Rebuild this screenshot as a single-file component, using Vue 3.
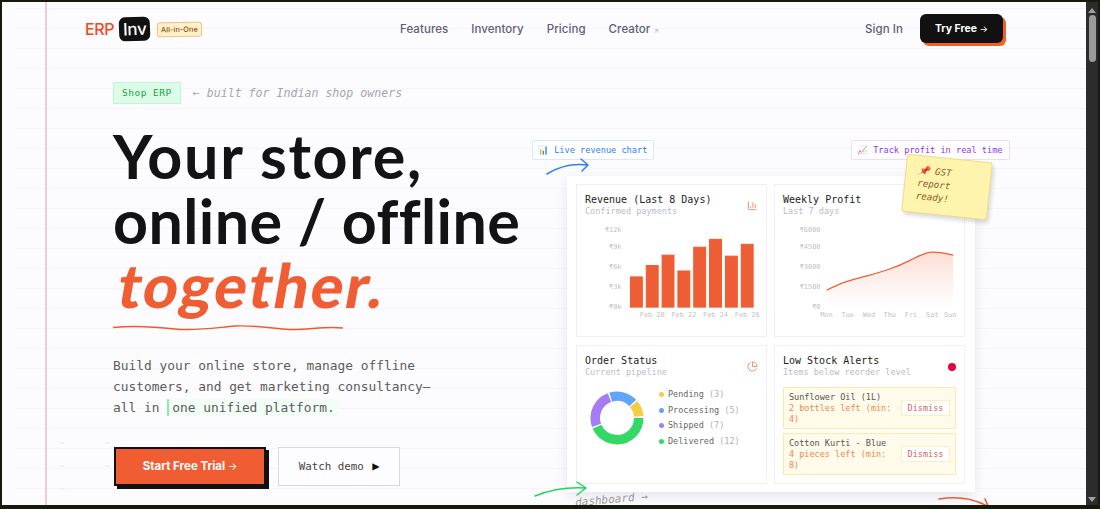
<script setup>
const navLinks = ['Features', 'Inventory', 'Pricing']

const barTops = [277, 265.5, 255, 271, 247, 239, 256, 244]
const revenueY = [['₹12k', 232], ['₹9k', 249], ['₹6k', 269], ['₹3k', 289], ['₹0k', 309]]
const revenueX = [['Feb 20', 652], ['Feb 22', 684], ['Feb 24', 716], ['Feb 26', 748]]

const profitY = [['₹6000', 232], ['₹4500', 249], ['₹3000', 269], ['₹1500', 289], ['₹0', 309]]
const profitX = [['Mon', 826], ['Tue', 847.5], ['Wed', 869], ['Thu', 890], ['Fri', 911.5], ['Sat', 933], ['Sun', 951]]
const profitLine = 'M826 290.5C833 287 840 283.5 847 281.5C854 279.5 861 277.5 869 275.5C876 273.5 883 271.5 890 269C897 266.5 904 263.5 911 260C918 256.500 925 252.500 932 252C940 251.500 947 253.500 954 255'

const circ = 2 * Math.PI * 21.75
const orders = [
  { name: 'Pending', count: 3, color: '#f8cb45' },
  { name: 'Processing', count: 5, color: '#60a5fa' },
  { name: 'Shipped', count: 7, color: '#a67cf2' },
  { name: 'Delivered', count: 12, color: '#35d866' }
]
// donut starts at 3 o'clock and goes clockwise, delivered first
const ringStarts = { Delivered: 0, Shipped: 160, Processing: 253.3, Pending: 320 }
const ringSpans = { Delivered: 160, Shipped: 93.3, Processing: 66.7, Pending: 40 }
const dash = (name) => `${(ringSpans[name] / 360) * circ - 1.6} ${circ}`

const alerts = [
  { name: 'Sunflower Oil (1L)', note: '2 bottles left (min: 4)' },
  { name: 'Cotton Kurti - Blue', note: '4 pieces left (min: 8)' }
]
</script>

<template>
  <div class="desk">
    <div class="page">
      <header class="nav">
        <div class="logo">
          <span class="logoErp">ERP</span>
          <span class="logoInv">Inv</span>
          <span class="logoBadge">All-in-One</span>
        </div>
        <nav class="links">
          <a v-for="link in navLinks" :key="link">{{ link }}</a>
          <a>Creator <small>↗</small></a>
        </nav>
        <div class="navRight">
          <a>Sign In</a>
          <button class="tryFree">Try Free <small>→</small></button>
        </div>
      </header>

      <main class="hero">
        <section class="left">
          <div class="tagRow">
            <span class="shopTag">Shop ERP</span>
            <span class="tagNote">← built for Indian shop owners</span>
          </div>
          <h1 class="headline">
            <span class="lineOne">Your store,</span><br />online / offline<br />
            <span class="together">
              <span class="togetherText">together.</span>
              <svg class="wave" viewBox="0 0 230 8" fill="none">
                <path d="M0 3.500C20 1.500 40 2.500 62 5C82 7 100 4 122 2C142 1 160 4.500 176 5.500C195 6 212 2 230 4" stroke="#f05a30" stroke-width="1.400" />
              </svg>
            </span>
          </h1>
          <p class="intro">
            Build your online store, manage offline<br />
            customers, and get marketing consultancy—<br />
            all in <span class="mark">one unified platform.</span>
          </p>
          <div class="actions">
            <button class="primary">Start Free Trial <small>→</small></button>
            <button class="secondary">Watch demo <b>▶</b></button>
          </div>
        </section>

        <section class="panelWrap">
          <span class="floatTag blue">📊 Live revenue chart</span>
          <span class="floatTag purple">📈 Track profit in real time</span>
          <div class="sticky">📌 GST<br />report<br />ready!</div>

          <div class="panel">
            <article class="card">
              <div class="cardHead">
                <div>
                  <h3>Revenue (Last 8 Days)</h3>
                  <p>Confirmed payments</p>
                </div>
                <svg class="cardIcon" viewBox="0 0 24 24" fill="none" stroke="#f05d33" stroke-width="2">
                  <path d="M3 3v16a2 2 0 0 0 2 2h16" /><path d="M18 17V9" /><path d="M13 17V5" /><path d="M8 17v-3" />
                </svg>
              </div>
              <svg class="chart" viewBox="576 220 191 100">
                <text v-for="t in revenueY" :key="t[0]" x="621" :y="t[1]" text-anchor="end" class="axis">{{ t[0] }}</text>
                <rect v-for="(top, i) in barTops" :key="i" :x="630 + i * 16" :y="top" width="12" :height="307.500 - top" fill="#ee5e36" stroke="#f4572b" />
                <text v-for="t in revenueX" :key="t[0]" :x="t[1]" y="318" text-anchor="middle" class="axis">{{ t[0] }}</text>
              </svg>
            </article>

            <article class="card">
              <div class="cardHead">
                <div>
                  <h3>Weekly Profit</h3>
                  <p>Last 7 days</p>
                </div>
              </div>
              <svg class="chart" viewBox="774 220 191 100">
                <defs>
                  <linearGradient id="profitFill" x1="0" y1="0" x2="0" y2="1">
                    <stop offset="0" stop-color="#f05d33" stop-opacity="0.2" />
                    <stop offset="1" stop-color="#f05d33" stop-opacity="0" />
                  </linearGradient>
                </defs>
                <text v-for="t in profitY" :key="t[0]" x="820" :y="t[1]" text-anchor="end" class="axis">{{ t[0] }}</text>
                <path :d="profitLine + 'V307H826Z'" fill="url(#profitFill)" />
                <path :d="profitLine" fill="none" stroke="#f05d33" stroke-width="1.300" />
                <text v-for="t in profitX" :key="t[0]" :x="t[1]" y="318" text-anchor="middle" class="axis">{{ t[0] }}</text>
              </svg>
            </article>

            <article class="card">
              <div class="cardHead">
                <div>
                  <h3>Order Status</h3>
                  <p>Current pipeline</p>
                </div>
                <svg class="cardIcon" viewBox="0 0 24 24" fill="none" stroke="#f05d33" stroke-width="2">
                  <path d="M21.210 15.890A10 10 0 1 1 8 2.830" /><path d="M22 12A10 10 0 0 0 12 2v10z" />
                </svg>
              </div>
              <div class="orderBody">
                <svg class="donut" viewBox="0 0 54 54">
                  <circle v-for="o in orders" :key="o.name" cx="27" cy="27" r="21.750" fill="none" :stroke="o.color" stroke-width="9.500"
                    :stroke-dasharray="dash(o.name)" :transform="`rotate(${ringStarts[o.name]} 27 27)`" />
                </svg>
                <ul class="legend">
                  <li v-for="o in orders" :key="o.name">
                    <i :style="{ background: o.color }"></i>{{ o.name }} <span>({{ o.count }})</span>
                  </li>
                </ul>
              </div>
            </article>

            <article class="card">
              <div class="cardHead">
                <div>
                  <h3>Low Stock Alerts</h3>
                  <p>Items below reorder level</p>
                </div>
                <span class="redDot"></span>
              </div>
              <div class="alert" v-for="a in alerts" :key="a.name">
                <div class="alertText">
                  <strong>{{ a.name }}</strong>
                  <span>{{ a.note }}</span>
                </div>
                <button class="dismiss">Dismiss</button>
              </div>
            </article>
          </div>
        </section>
      </main>

      <!-- hand drawn arrows and scribbles over the page -->
      <svg class="scribbles" viewBox="0 0 1084 503" fill="none" stroke-linecap="round" stroke-linejoin="round">
        <path d="M545 172C556 165 570 161 586 163M579 157L586 163L580 169" stroke="#2f7df6" stroke-width="1.500" />
        <path d="M533 494C548 488 565 485 583 486M575 480L584 486L575 493" stroke="#22d55e" stroke-width="1.500" />
        <path d="M937 497C955 494 972 497 985 504M978 505L987 506L983 497" stroke="#f05a30" stroke-width="1.600" />
        <path d="M969 160.500L976 161" stroke="#a855f7" stroke-width="1.500" />
        <path d="M58 441h4M103 441h4M58 464h4M103 464h4M58 487h4" stroke="#e8e6ec" />
      </svg>
      <span class="scribbleText">dashboard →</span>
    </div>

    <div class="scrollbar">
      <span class="arrowUp"></span>
      <span class="thumb"></span>
      <span class="arrowDown"></span>
    </div>
  </div>
</template>

<style>
html, body {
  margin: 0;
  background: #141a0c;
  overflow: hidden;
}
</style>

<style scoped>
.desk {
  display: flex;
  height: 509px;
  width: 1100px;
  background: #141a0c;
  overflow: hidden;
}

.page {
  position: relative;
  width: 1084px;
  height: 503px;
  margin: 2px 0 0 2px;
  overflow: hidden;
  background:
    linear-gradient(#f9c9d8, #f9c9d8) 43px 0 / 2px 100% no-repeat,
    repeating-linear-gradient(to bottom, transparent 0 6px, #f7f5f9 6px 7px, transparent 7px 20px) 14px 0 / 100% 100% no-repeat,
    #fcfbfe;
}

.nav {
  display: flex;
  align-items: center;
  height: 54px;
  padding: 0 83px;
  font-family: "Inter", sans-serif;
  font-size: 11.5px;
  font-weight: 500;
  letter-spacing: 0.06px;
  color: #5e5e78;
}

.logo {
  display: flex;
  align-items: center;
  width: 315px;
}

.logoErp {
  font-size: 16px;
  color: #f04a22;
  letter-spacing: -0.4px;
}

.logoInv {
  margin-left: 5px;
  padding: 2px 4px;
  background: #111;
  border-radius: 6px;
  color: #fff;
  font-size: 17px;
  letter-spacing: -0.3px;
  transform: rotate(-2deg);
}

.logoBadge {
  margin-left: 6px;
  padding: 2px 3px;
  background: #fef3c7;
  border: 1px solid #fdba8c;
  border-radius: 3px;
  color: #92400e;
  font-size: 7.300px;
  transform: rotate(-1deg);
}

.links {
  display: flex;
  gap: 23px;
}

.links small {
  font-size: 7px;
  color: #bbb;
}

.navRight {
  display: flex;
  align-items: center;
  gap: 17px;
  margin-left: auto;
}

.tryFree {
  width: 83px;
  height: 29px;
  margin-top: -1px;
  border: none;
  border-radius: 6px;
  background: #111;
  box-shadow: 3px 3px 0 #f4611f;
  color: #fff;
  font-family: inherit;
  font-size: 10.500px;
  font-weight: 700;
}

.tryFree small,
.primary small {
  font-size: 0.85em;
  font-weight: 400;
}

.hero {
  display: flex;
  padding: 26px 0 0 111px;
}

.left {
  width: 454px;
  flex: none;
}

.tagRow {
  display: flex;
  align-items: center;
  gap: 10px;
  font-family: "DejaVu Sans Mono", monospace;
}

.shopTag {
  padding: 0 8px;
  line-height: 20px;
  background: #dcfce7;
  border: 1px solid #bbf7d0;
  color: #16a34a;
  font-size: 9.500px;
  letter-spacing: 0.5px;
}

.tagNote {
  margin-left: 2px;
  color: #a6a6ac;
  font-size: 11.600px;
  font-style: italic;
}

.headline {
  margin: 20px 0 0;
  font-family: "Lato", sans-serif;
  font-size: 61px;
  font-weight: 700;
  letter-spacing: 0.4px;
  line-height: 64.500px;
  color: #131313;
}

.lineOne {
  letter-spacing: 1.7px;
}

.together {
  position: relative;
  display: inline-block;
  color: #f05d33;
}

.togetherText {
  display: inline-block;
  font-weight: 900;
  letter-spacing: 2.2px;
  transform: translateX(6px) skewX(-10deg);
}

.wave {
  position: absolute;
  left: 0;
  top: 71px;
  width: 230px;
  height: 8px;
}

.intro {
  margin: 37px 0 0;
  font-family: "DejaVu Sans Mono", monospace;
  font-size: 12.870px;
  line-height: 21px;
  color: #5c5c5c;
}

.mark {
  padding: 1px 3px;
  background: #f2fdf5;
  border-left: 2px solid #86efac;
}

.actions {
  display: flex;
  align-items: flex-start;
  gap: 12px;
  margin-top: 29px;
  padding-left: 1px;
}

.primary {
  width: 152px;
  height: 39px;
  border: 2px solid #111;
  background: #f05d33;
  box-shadow: 3px 3px 0 #111;
  color: #fff;
  font-family: "Inter", sans-serif;
  font-size: 11.500px;
  font-weight: 700;
}

.secondary {
  width: 122px;
  height: 39px;
  border: 1px solid #d8d8dc;
  background: #fdfcff;
  color: #444;
  font-family: "DejaVu Sans Mono", monospace;
  font-size: 10.800px;
}

.secondary b {
  margin-left: 2px;
  color: #111;
  font-size: 12px;
}

.panelWrap {
  position: relative;
  width: 408px;
  margin-top: 94px;
}

.panel {
  display: grid;
  grid-template-columns: 191px 191px;
  grid-template-rows: 153px 139px;
  gap: 8px 7px;
  padding: 8px 9px;
  background: #fff;
  box-shadow: 0 4px 12px rgba(40, 30, 70, 0.1);
  font-family: "DejaVu Sans Mono", monospace;
}

.card {
  padding: 9px 8px;
  border: 1px solid #f0eff5;
  background: #fff;
}

.cardHead {
  display: flex;
  justify-content: space-between;
  align-items: center;
}

.cardHead h3 {
  margin: 0;
  font-size: 10px;
  font-weight: 400;
  line-height: 12px;
  color: #222;
}

.cardHead p {
  margin: 0;
  font-size: 8.500px;
  line-height: 11px;
  color: #babaCE;
}

.cardIcon {
  width: 11px;
  height: 11px;
  opacity: 0.75;
}

.redDot {
  width: 8px;
  height: 8px;
  border-radius: 50%;
  background: #e6003d;
}

.chart {
  display: block;
  width: 189px;
  height: 100px;
  margin: 3px -8px 0;
}

.axis {
  font-family: "DejaVu Sans Mono", monospace;
  font-size: 7px;
  fill: #c0c0c8;
}

.orderBody {
  display: flex;
  align-items: center;
  gap: 15px;
  margin-top: 9px;
  padding-left: 5px;
}

.donut {
  width: 54px;
  height: 54px;
  flex: none;
}

.legend {
  margin: 0;
  padding: 0;
  list-style: none;
  font-size: 8.500px;
  line-height: 15.500px;
  color: #666;
}

.legend i {
  display: inline-block;
  width: 5px;
  height: 5px;
  margin-right: 4px;
  border-radius: 50%;
}

.legend span {
  color: #b0b0b8;
}

.alert {
  display: flex;
  align-items: center;
  gap: 6px;
  height: 42px;
  box-sizing: border-box;
  margin: 4px 0 0;
  padding: 0 5px;
  background: #fffbeb;
  border: 1px solid #fde9a8;
}

.cardHead + .alert {
  margin-top: 9px;
}

.alertText {
  display: flex;
  flex-direction: column;
  flex: 1;
  font-size: 8.500px;
  line-height: 11px;
  color: #f2894c;
}

.alertText strong {
  font-weight: 400;
  color: #555;
}

.dismiss {
  width: 49px;
  height: 16px;
  flex: none;
  padding: 0;
  background: #fff;
  border: 1px solid #fdeec4;
  color: #d4675c;
  font-family: inherit;
  font-size: 8.500px;
}

.floatTag {
  position: absolute;
  top: -36px;
  padding: 0 6px 0 5px;
  line-height: 18px;
  background: #fff;
  border-radius: 2px;
  font-family: "DejaVu Sans Mono", monospace;
  font-size: 8.600px;
  white-space: nowrap;
}

.blue {
  left: -35px;
  border: 1px solid #dbe8fb;
  color: #2f7df6;
}

.purple {
  left: 284px;
  border: 1px solid #eddcfb;
  color: #9333ea;
}

.sticky {
  position: absolute;
  z-index: 2;
  left: 337px;
  top: -18px;
  width: 60px;
  height: 42px;
  padding: 7px 12px;
  background: #fff4ad;
  border: 1px solid #ecdc8a;
  border-radius: 3px;
  box-shadow: 2px 3px 4px rgba(0, 0, 0, 0.15);
  color: #8a5c2c;
  font-family: "DejaVu Sans Mono", monospace;
  font-size: 9.200px;
  font-style: italic;
  line-height: 13px;
  transform: rotate(6deg);
}

.scribbles {
  position: absolute;
  inset: 0;
  width: 1084px;
  height: 503px;
  pointer-events: none;
}

.scribbleText {
  position: absolute;
  left: 573px;
  top: 491px;
  color: #999;
  font-family: "DejaVu Sans Mono", monospace;
  font-size: 11px;
  font-style: italic;
  transform: rotate(-5deg);
}

.scrollbar {
  position: relative;
  display: flex;
  flex-direction: column;
  align-items: center;
  width: 12px;
  height: 503px;
  margin-top: 2px;
  background: #2c2c2c;
}

.arrowUp,
.arrowDown {
  width: 0;
  height: 0;
  border-left: 4px solid transparent;
  border-right: 4px solid transparent;
}

.arrowUp {
  margin-top: 6px;
  border-bottom: 5px solid #a0a0a0;
}

.arrowDown {
  margin-top: auto;
  margin-bottom: 3px;
  border-top: 5px solid #a0a0a0;
}

.thumb {
  width: 7px;
  height: 47px;
  margin-top: 2px;
  border-radius: 4px;
  background: #9a9a9a;
}
</style>
